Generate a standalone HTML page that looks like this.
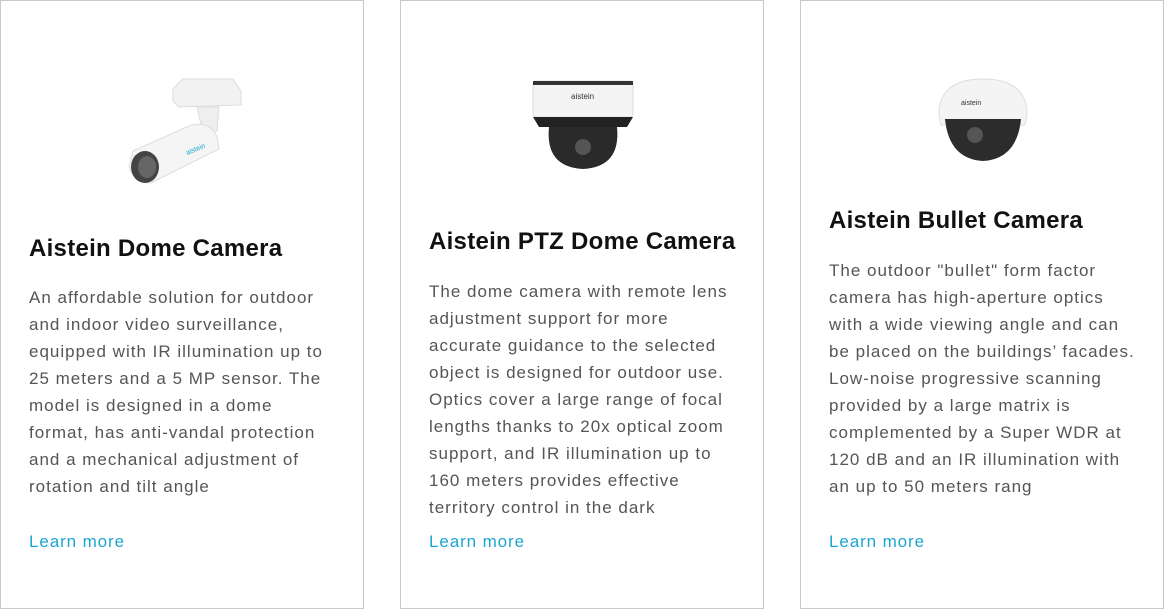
<!DOCTYPE html>
<html><head><meta charset="utf-8"><style>
*{margin:0;padding:0;box-sizing:border-box}
body{width:1164px;height:609px;background:#fff;font-family:"Liberation Sans",sans-serif;position:relative;overflow:hidden}
.card{position:absolute;top:0;width:364px;height:609px;border:1px solid #c9c9c9;background:#fff}
.t{position:absolute;left:28px;font-size:24px;font-weight:bold;color:#111;white-space:nowrap;letter-spacing:0.28px}
.b{position:absolute;left:28px;font-size:17px;line-height:27px;color:#555;white-space:nowrap;letter-spacing:1px}
.l{position:absolute;left:28px;top:531px;font-size:17px;color:#1aa6d5;letter-spacing:0.9px}
svg{position:absolute}
</style></head><body>

<div class="card" style="left:0">
<svg style="left:120px;top:70px" width="130" height="120" viewBox="0 0 130 120">
<path d="M52 18 L62 8 L112 8 L120 20 L120 34 L58 36 L52 30Z" fill="#f2f2f2" stroke="#ddd"/>
<path d="M76 36 L98 36 L96 60 L82 62Z" fill="#eee" stroke="#ddd"/>
<path d="M12 80 L70 54 Q90 50 96 66 L98 78 L30 112 Q14 112 8 96Z" fill="#f5f5f5" stroke="#ddd"/>
<ellipse cx="24" cy="96" rx="14" ry="16" fill="#444"/>
<ellipse cx="26" cy="96" rx="9" ry="11" fill="#666"/>
<text x="66" y="84" font-size="7" fill="#1aa6d5" font-family="Liberation Sans" transform="rotate(-22 66 84)">aistein</text>
</svg>
<div class="t" style="top:234px">Aistein Dome Camera</div>
<div class="b" style="top:283px">An affordable solution for outdoor<br>and indoor video surveillance,<br>equipped with IR illumination up to<br>25 meters and a 5 MP sensor. The<br>model is designed in a dome<br>format, has anti-vandal protection<br>and a mechanical adjustment of<br>rotation and tilt angle</div>
<div class="l">Learn more</div>
</div>

<div class="card" style="left:400px">
<svg style="left:130px;top:78px" width="104" height="94" viewBox="0 0 104 94">
<rect x="2" y="2" width="100" height="36" rx="3" fill="#f4f4f4" stroke="#ddd"/>
<rect x="2" y="2" width="100" height="4" fill="#333"/>
<path d="M2 38 L102 38 L96 48 L8 48Z" fill="#222"/>
<path d="M18 48 L86 48 Q90 88 52 90 Q14 88 18 48Z" fill="#2a2a2a"/>
<circle cx="52" cy="68" r="8" fill="#555"/>
<text x="40" y="20" font-size="8" fill="#333" font-family="Liberation Sans">aistein</text>
</svg>
<div class="t" style="top:227px">Aistein PTZ Dome Camera</div>
<div class="b" style="top:277px">The dome camera with remote lens<br>adjustment support for more<br>accurate guidance to the selected<br>object is designed for outdoor use.<br>Optics cover a large range of focal<br>lengths thanks to 20x optical zoom<br>support, and IR illumination up to<br>160 meters provides effective<br>territory control in the dark</div>
<div class="l">Learn more</div>
</div>

<div class="card" style="left:800px">
<svg style="left:134px;top:74px" width="96" height="90" viewBox="0 0 96 90">
<path d="M4 40 Q4 4 48 4 Q92 4 92 40 L90 50 L6 50Z" fill="#f4f4f4" stroke="#ddd"/>
<path d="M10 44 Q14 84 48 86 Q82 84 86 44Z" fill="#2c2c2c"/>
<circle cx="40" cy="60" r="8" fill="#555"/>
<text x="26" y="30" font-size="7" fill="#333" font-family="Liberation Sans">aistein</text>
</svg>
<div class="t" style="top:206px">Aistein Bullet Camera</div>
<div class="b" style="top:256px">The outdoor "bullet" form factor<br>camera has high-aperture optics<br>with a wide viewing angle and can<br>be placed on the buildings’ facades.<br>Low-noise progressive scanning<br>provided by a large matrix is<br>complemented by a Super WDR at<br>120 dB and an IR illumination with<br>an up to 50 meters rang</div>
<div class="l">Learn more</div>
</div>

</body></html>
